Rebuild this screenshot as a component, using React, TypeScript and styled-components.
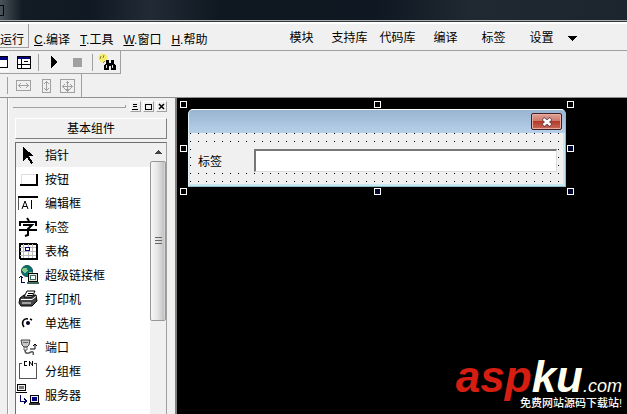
import React from 'react';
import styled, { createGlobalStyle } from 'styled-components';

const Global = createGlobalStyle`
  * { box-sizing: border-box; }
  body { margin: 0; background: #f0f0f0; }
  body, button, input { font: 12px/16px "Liberation Sans", "Noto Sans CJK SC", sans-serif; color: #000; }
`;

const Shell = styled.div`
  height: 100vh;
  overflow: hidden;
  display: flex;
  flex-direction: column;
  background: #f0f0f0;
`;

const TitleBar = styled.header`
  flex: none;
  height: 22px;
  background: linear-gradient(90deg, #4a545a 0, #131b24 22px, #101923 90px, #222b35 150px, #0f1821 220px, #0f1822 60%, #202932 75%, #1c252e 100%);
  border-bottom: 1px solid #33383d;
  box-shadow: inset 0 -1px #a9adb0;
  display: flex;
  align-items: center;
`;

const TitleGlyph = styled.span`
  width: 4px;
  height: 11px;
  border: 1px solid #05080b;
  border-left: 0;
`;

const MenuBar = styled.nav`
  flex: none;
  height: 29px;
  display: flex;
  align-items: stretch;
  border-top: 2px solid #fff;
  border-bottom: 1px solid #a0a0a0;
`;

const MenuItem = styled.button<{ $active?: boolean }>`
  flex: none;
  border: 0;
  border-right: 1px solid ${p => (p.$active ? '#a0a0a0' : 'transparent')};
  background: none;
  padding: ${p => (p.$active ? '8px 4px 0 0' : '5px 4px 0 5px')};
  margin-bottom: ${p => (p.$active ? '3px' : '0')};
  box-shadow: ${p => (p.$active ? '0 1px #a0a0a0' : 'none')};
  white-space: nowrap;
`;

const QuickMenu = styled.div`
  display: flex;
  margin-left: 65px;
  padding-top: 2px;
`;

const QuickItem = styled.button`
  width: 48px;
  padding: 0;
  border: 0;
  background: none;
  white-space: nowrap;
`;

const MoreButton = styled.button`
  width: 14px;
  padding: 0;
  border: 0;
  background: none;
  display: flex;
  align-items: center;
  justify-content: center;
`;

const ToolRow = styled.div<{ $underline?: boolean }>`
  flex: none;
  align-self: flex-start;
  height: 23px;
  display: flex;
  align-items: center;
  border-right: 1px solid #a0a0a0;
  border-bottom: ${p => (p.$underline ? '1px solid #a0a0a0' : '0')};
`;

const ToolButton = styled.button<{ $width: number; $pressed?: boolean }>`
  width: ${p => p.$width}px;
  height: 20px;
  padding: 0;
  border: 0;
  background: ${p => (p.$pressed ? '#fafafa' : 'none')};
  display: flex;
  align-items: center;
  justify-content: center;
`;

const Separator = styled.span<{ $before?: number }>`
  width: 1px;
  height: 17px;
  margin-left: ${p => p.$before ?? 0}px;
  background: #a0a0a0;
`;

const Main = styled.main`
  flex: 1;
  min-height: 0;
  display: flex;
  border-top: 1px solid #909090;
`;

const Gutter = styled.div`
  flex: none;
  width: 8px;
  border-right: 1px solid #a0a0a0;
  box-shadow: 1px 0 #fff;
`;

const Dock = styled.aside`
  flex: none;
  width: 167px;
  padding: 3px 8px 0 7px;
  display: flex;
  flex-direction: column;
`;

const DockHeader = styled.div`
  flex: none;
  display: flex;
  align-items: center;
  gap: 2px;
  height: 11px;
`;

const Grip = styled.span`
  flex: 1;
  height: 3px;
  margin: 0 2px 0 -2px;
  border: solid #a0a0a0;
  border-width: 0 1px 1px 0;
`;

const DockButton = styled.button`
  width: 11px;
  height: 11px;
  padding: 0;
  background: #f0f0f0;
  border: 1px solid;
  border-color: #fff #a0a0a0 #a0a0a0 #fff;
  display: flex;
  align-items: center;
  justify-content: center;
`;

const GroupButton = styled.button`
  flex: none;
  height: 21px;
  margin: 6px 0 3px;
  padding: 1px 0 0;
  background: #f0f0f0;
  border: 1px solid;
  border-color: #fff #808080 #808080 #fff;
`;

const ListFrame = styled.div`
  flex: 1;
  min-height: 0;
  display: flex;
  overflow: hidden;
  background: #fff;
  border: 1px solid #6e6e6e;
  border-right-color: #a0a0a0;
  border-bottom: 0;
`;

const List = styled.ul`
  flex: 1;
  margin: 0;
  padding: 0;
  list-style: none;
`;

const Item = styled.li`
  margin: 0;
`;

const ItemButton = styled.button<{ $selected?: boolean }>`
  width: 100%;
  height: 24px;
  padding: 0;
  border: 0;
  display: flex;
  align-items: center;
  gap: 4px;
  text-align: left;
  background: ${p => (p.$selected ? '#f0f0f0' : '#fff')};
`;

const ItemText = styled.span`
  padding-top: 2px;
`;

const ScrollBar = styled.div`
  flex: none;
  width: 16px;
  background: #f0f0f0;
`;

const ScrollUp = styled.button`
  display: flex;
  align-items: center;
  justify-content: center;
  width: 100%;
  height: 18px;
  padding: 0;
  border: 0;
  background: none;
`;

const Thumb = styled.div`
  height: 160px;
  border: 1px solid #979797;
  border-radius: 2px;
  background: linear-gradient(90deg, #f7f7f7, #e6e6e8 45%, #c4c4c8 90%, #dcdcdc);
  display: flex;
  align-items: center;
  justify-content: center;
`;

const Canvas = styled.section`
  flex: 1;
  min-width: 0;
  display: flex;
  flex-direction: column;
  justify-content: space-between;
  align-items: flex-start;
  padding: 3px 5px 4px 3px;
  background: #000;
  border-left: 2px solid #808080;
`;

const Selection = styled.div`
  position: relative;
  width: 394px;
  max-width: 100%;
  padding: 8px;
`;

const Handle = styled.span<{ $x: number; $y: number }>`
  position: absolute;
  left: calc((100% - 7px) * ${p => p.$x});
  top: calc((100% - 7px) * ${p => p.$y});
  width: 7px;
  height: 7px;
  border: 1px solid #fff;
  background: ${p => (p.$x + p.$y > 1 ? '#000830' : '#000')};
`;

const FormWindow = styled.div`
  border: 1px solid #8fb9c6;
  border-top-color: #fff;
  border-left-color: #dff1f7;
  border-radius: 5px 5px 0 0;
  overflow: hidden;
  background: #c9e9f2;
`;

const FormTitle = styled.div`
  height: 23px;
  padding: 3px 3px 0 0;
  display: flex;
  justify-content: flex-end;
  background: linear-gradient(#99b4d1, #b7d0ea);
`;

const CloseButton = styled.button`
  width: 31px;
  height: 17px;
  padding: 0;
  border: 1px solid #421e24;
  border-radius: 2px;
  box-shadow: inset 0 0 0 1px #e9aca0;
  background: linear-gradient(#dfa196 0, #cd7669 48%, #b33a29 50%, #c9695b 100%);
  display: flex;
  align-items: center;
  justify-content: center;
`;

const FormBody = styled.div`
  height: 51px;
  margin: 0 2px 2px 1px;
  padding: 16px 6px 0 1px;
  display: flex;
  background-color: #f0f0f0;
  background-image: radial-gradient(circle at 0 0, #000 1px, transparent 1px);
  background-size: 8px 8px;
`;

const FieldLabel = styled.label`
  width: 63px;
  height: 23px;
  padding: 5px 0 0 7px;
  background: #f0f0f0;
`;

const Field = styled.input`
  flex: 1;
  min-width: 0;
  height: 23px;
  padding: 0 3px;
  background: #fff;
  border: solid;
  border-width: 2px 1px 1px 2px;
  border-color: #777 #dcdcdc #dcdcdc #777;
  outline: 0;
`;

const Brand = styled.div`
  align-self: flex-end;
  display: flex;
  flex-direction: column;
  align-items: flex-end;
  color: #fff;
`;

const BrandName = styled.div`
  margin-bottom: -8px;
  font: italic bold 44px/36px "Liberation Sans", sans-serif;
  color: #fffff0;
`;

const BrandRed = styled.span`
  color: #d61d12;
`;

const BrandDomain = styled.span`
  font-size: 18px;
  font-weight: normal;
`;

const BrandNote = styled.div`
  font: 500 11px/14px "Liberation Sans", "Noto Sans CJK SC", sans-serif;
`;

const Svg = ({ w, h, children }: { w: number; h: number; children: React.ReactNode }) => (
  <svg width={w} height={h} viewBox={`0 0 ${w} ${h}`} fill="none" stroke="#000" shapeRendering="crispEdges" aria-hidden="true">
    {children}
  </svg>
);

const icons: Record<string, React.ReactNode> = {
  指针: <path d="M7 4v14l4-4 4 7 2-1-4-7h5z" fill="#000" stroke="none" />,
  按钮: (
    <>
      <path d="M5 18V7h17" stroke="#ddd" />
      <path d="M4 18h18M21 7v12" strokeWidth="2" />
    </>
  ),
  编辑框: (
    <>
      <path d="M2.500 19V6" stroke="#555" />
      <path d="M2 6h20" strokeWidth="2" />
      <path d="M6 18l3-8 3 8M7 15.500h4M15.500 9v9" shapeRendering="auto" />
    </>
  ),
  标签: <path d="M11 3l2 3M4 11V7h16v4M7 10h9l-4 4v6l-3 1M3 15h18" strokeWidth="2" shapeRendering="auto" />,
  表格: (
    <>
      <path d="M4 5h17v15H4z" fill="#fff" />
      <path d="M4 8.500h16M4 12.500h16M4 16.500h16M7.500 5v15M12.500 5v15M16.500 5v15" stroke="#bbb" />
      <path d="M3.500 4.500h17v15h-17z" />
      <path d="M9.500 8.500h4v3h-4z" fill="#fff" stroke="#000080" />
    </>
  ),
  超级链接框: (
    <>
      <circle cx="11" cy="8" r="5.500" fill="#08736f" stroke="#184b48" shapeRendering="auto" />
      <path d="M7 5h4l1 3-3 2-3-2zM13 9h3l-2 3z" fill="#8bc989" stroke="none" />
      <path d="M12.500 10.500h9v8h-9z" fill="#d8ead6" />
      <path d="M14.500 12.500h5v4h-5z" fill="#fff" stroke="#39715d" />
      <path d="M11 20h12" strokeWidth="2" stroke="#456c5f" />
      <path d="M9 19H5v-6M2.500 15.500L5 13l2.500 2.500" stroke="#000058" />
    </>
  ),
  打印机: (
    <g shapeRendering="auto">
      <path d="M4 11l4-3h12l1 6-5 5H5l-2-3z" fill="#444" />
      <path d="M8 10l3-6h8l-3 6z" fill="#fff" />
      <path d="M12 6.500h5M11 8.500h5" />
      <path d="M5 12.500h11l4-3M6 16h9" stroke="#fff" />
    </g>
  ),
  单选框: (
    <g shapeRendering="auto">
      <path d="M8 16c-3-4-1-9 4-8M14 8l2 1" strokeWidth="1.500" />
      <circle cx="12" cy="12" r="2" fill="#00002c" stroke="none" />
    </g>
  ),
  端口: (
    <g shapeRendering="auto">
      <path d="M5 5h9l-1 5-2 2H8l-2-2z" fill="#c9c9c9" stroke="#444" />
      <path d="M7 7.500h5M8 12h3v3H8z" stroke="#666" />
      <path d="M9 15c0 5 4 3 6 2s3 1 2 3" stroke="#555" strokeWidth="1.500" />
      <path d="M14 14h5V9M17 11l2-2 2 2" />
    </g>
  ),
  分组框: (
    <>
      <path d="M6 4.500H3.500v15h17v-15H18" stroke="#555" />
      <path d="M11 2.500H8.500v4H11M13.500 7V2M16.500 7V2" />
      <path d="M13.500 2.500l3 4" shapeRendering="auto" />
    </>
  ),
  服务器: (
    <>
      <path d="M1.500 1.500h8v6h-8z" fill="#eee" />
      <path d="M3 3h5v3H3z" fill="#777" stroke="none" />
      <path d="M0 9.500h11" />
      <path d="M4.500 12v6H10M8 15.500l2.500 2.500L8 20.500" stroke="#000064" />
      <path d="M14.500 12.500h8v7h-8z" fill="#eee" />
      <path d="M16 14h5v4h-5z" fill="#000080" stroke="none" />
      <path d="M13 21h11" strokeWidth="2" stroke="#333" />
    </>
  ),
};

const menu = [['C', '编译'], ['T', '工具'], ['W', '窗口'], ['H', '帮助']];
const quick = ['模块', '支持库', '代码库', '编译', '标签', '设置'];
const handles = [[0, 0], [0.5, 0], [1, 0], [0, 0.5], [1, 0.5], [0, 1], [0.5, 1], [1, 1]];

export default function App() {
  return (
    <Shell>
      <Global />
      <TitleBar><TitleGlyph /></TitleBar>
      <MenuBar>
        <MenuItem $active>运行</MenuItem>
        {menu.map(([key, name]) => (
          <MenuItem key={key}><u>{key}</u>.{name}</MenuItem>
        ))}
        <QuickMenu>
          {quick.map(name => <QuickItem key={name}>{name}</QuickItem>)}
          <MoreButton aria-label="更多">
            <Svg w={10} h={5}><path d="M0 0h10L5 5z" fill="#000" stroke="none" /></Svg>
          </MoreButton>
        </QuickMenu>
      </MenuBar>

      <ToolRow $underline>
        <ToolButton $width={9} $pressed aria-label="窗口">
          <Svg w={9} h={14}>
            <path d="M0 1.500h7.500v11H0" fill="#fff" />
            <path d="M0 3h8" stroke="#000080" strokeWidth="3" />
          </Svg>
        </ToolButton>
        <ToolButton $width={29} aria-label="布局">
          <Svg w={14} h={13}>
            <path d="M.5.500h13v12H.5z" fill="#fff" />
            <path d="M1 2h12" stroke="#000080" strokeWidth="2" />
            <path d="M4.500 3v9M1 8.500h12M7 5.500h4" />
          </Svg>
        </ToolButton>
        <Separator />
        <ToolButton $width={30} aria-label="运行">
          <Svg w={6} h={12}><path d="M0 0l6 6-6 6z" fill="#000" stroke="none" /></Svg>
        </ToolButton>
        <ToolButton $width={17} aria-label="停止">
          <Svg w={9} h={9}><path d="M0 0h9v9H0z" fill="#a0a0a0" stroke="none" /></Svg>
        </ToolButton>
        <Separator $before={6} />
        <ToolButton $width={27} aria-label="查找">
          <Svg w={18} h={18}>
            <circle cx="5" cy="5" r="4.500" fill="#f4ed70" stroke="none" shapeRendering="auto" />
            <path d="M3 3l-1 3M6 2l-1 3M7 8l-2 2" stroke="#8a8330" shapeRendering="auto" />
            <path d="M8 7h3v3h2V7h3v3l2 3v4h-5v-4h-2v4H6v-4l2-3z" fill="#000" stroke="none" />
            <path d="M8.500 12v3M14.500 12v3" stroke="#ddd" />
          </Svg>
        </ToolButton>
      </ToolRow>
      <ToolRow>
        <Separator $before={7} />
        <ToolButton $width={31} aria-label="等宽">
          <Svg w={15} h={11}>
            <path d="M.5.500h14v10H.5zM2 5.500h11M5 3L2.500 5.500 5 8M10 3l2.500 2.500L10 8" stroke="#a0a0a0" />
          </Svg>
        </ToolButton>
        <ToolButton $width={15} aria-label="等高">
          <Svg w={9} h={14}>
            <path d="M.5.500h8v13H.5zM4.500 2v10M2 5l2.500-2.500L7 5M2 9l2.500 2.500L7 9" stroke="#a0a0a0" />
          </Svg>
        </ToolButton>
        <ToolButton $width={27} aria-label="等大小">
          <Svg w={15} h={14}>
            <path d="M.5.500h14v13H.5zM2 7.500h11M7.500 2v10M5 5L2.500 7.500 5 10M10 5l2.500 2.500L10 10M5.500 4.500l2-2 2 2M5.500 10l2 2 2-2" stroke="#a0a0a0" />
          </Svg>
        </ToolButton>
      </ToolRow>

      <Main>
        <Gutter />
        <Dock>
          <DockHeader>
            <Grip />
            <DockButton aria-label="菜单"><Svg w={7} h={7}><path d="M1 1.500h4M1 3.500h4M0 6h6" /></Svg></DockButton>
            <DockButton aria-label="最大化"><Svg w={7} h={7}><path d="M.5 1.500h6v5h-6zM0 1h7" /></Svg></DockButton>
            <DockButton aria-label="关闭"><Svg w={7} h={7}><path d="M1 1l5 5M6 1L1 6" strokeWidth="1.500" shapeRendering="auto" /></Svg></DockButton>
          </DockHeader>
          <GroupButton>基本组件</GroupButton>
          <ListFrame>
            <List>
              {Object.keys(icons).map((name, i) => (
                <Item key={name}>
                  <ItemButton $selected={i === 0}>
                    <Svg w={25} h={24}>{icons[name]}</Svg>
                    <ItemText>{name}</ItemText>
                  </ItemButton>
                </Item>
              ))}
            </List>
            <ScrollBar>
              <ScrollUp aria-label="向上滚动">
                <Svg w={7} h={4}><path d="M0 4L3.500 0 7 4z" fill="#444" stroke="none" /></Svg>
              </ScrollUp>
              <Thumb>
                <Svg w={7} h={8}><path d="M0 .5h7M0 3.500h7M0 6.500h7" stroke="#666" /></Svg>
              </Thumb>
            </ScrollBar>
          </ListFrame>
        </Dock>
        <Canvas>
          <Selection>
            <FormWindow>
              <FormTitle>
                <CloseButton aria-label="关闭">
                  <Svg w={12} h={10}>
                    <path d="M2 1.500l8 7M10 1.500l-8 7" stroke="#59424a" strokeWidth="4" shapeRendering="auto" />
                    <path d="M2.500 2l7 6M9.500 2l-7 6" stroke="#fff" strokeWidth="2.500" shapeRendering="auto" />
                  </Svg>
                </CloseButton>
              </FormTitle>
              <FormBody>
                <FieldLabel htmlFor="field">标签</FieldLabel>
                <Field id="field" />
              </FormBody>
            </FormWindow>
            {handles.map(([x, y]) => <Handle key={`${x}-${y}`} $x={x} $y={y} />)}
          </Selection>
          <Brand>
            <BrandName><BrandRed>asp</BrandRed>ku<BrandDomain>.com</BrandDomain></BrandName>
            <BrandNote>免费网站源码下载站!</BrandNote>
          </Brand>
        </Canvas>
      </Main>
    </Shell>
  );
}
